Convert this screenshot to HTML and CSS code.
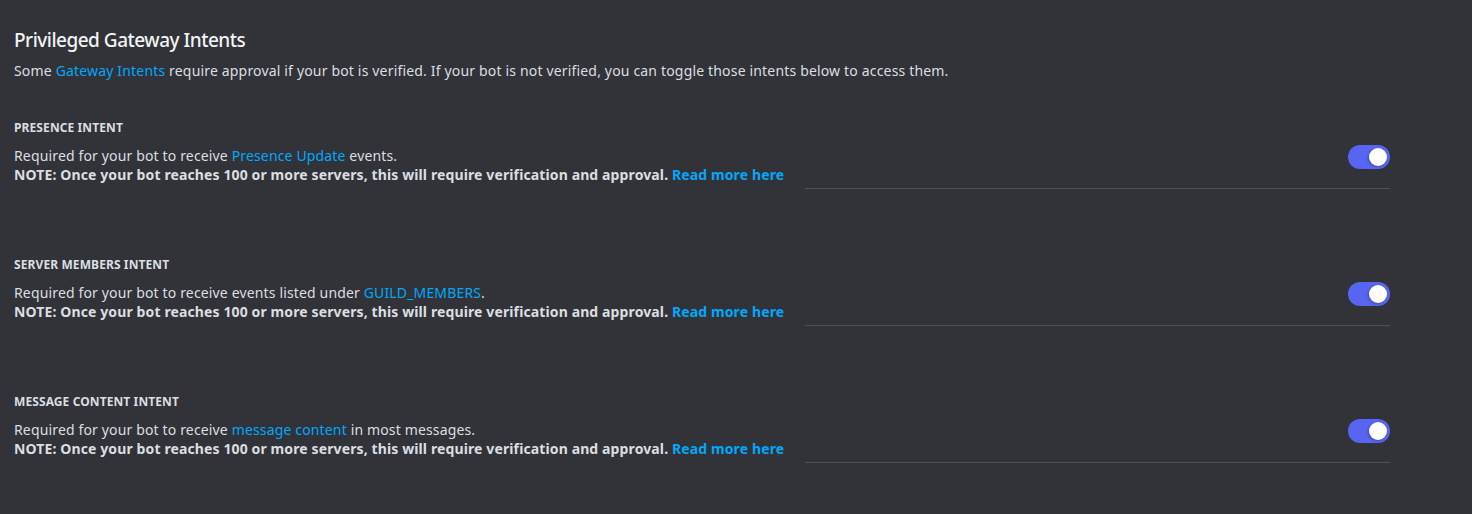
FILE: index.html
```html
<!DOCTYPE html>
<html>
<head>
<meta charset="utf-8">
<link rel="stylesheet" href="styles.css">
</head>
<body>
<div class="page">
  <h2 class="title">Privileged Gateway Intents</h2>
  <p class="intro">Some <a class="link">Gateway Intents</a> require approval if your bot is verified. If your bot is not verified, you can toggle those intents below to access them.</p>

  <section class="intent">
    <div class="label">PRESENCE INTENT</div>
    <div class="row">
      <div class="text">
        <div class="desc">Required for your bot to receive <a class="link">Presence Update</a> events.</div>
        <div class="note">NOTE: Once your bot reaches 100 or more servers, this will require verification and approval. <a class="link">Read more here</a></div>
      </div>
      <div class="side"><span class="toggle"><span class="knob"></span></span></div>
    </div>
  </section>

  <section class="intent">
    <div class="label">SERVER MEMBERS INTENT</div>
    <div class="row">
      <div class="text">
        <div class="desc">Required for your bot to receive events listed under <a class="link">GUILD_MEMBERS</a>.</div>
        <div class="note">NOTE: Once your bot reaches 100 or more servers, this will require verification and approval. <a class="link">Read more here</a></div>
      </div>
      <div class="side"><span class="toggle"><span class="knob"></span></span></div>
    </div>
  </section>

  <section class="intent">
    <div class="label">MESSAGE CONTENT INTENT</div>
    <div class="row">
      <div class="text">
        <div class="desc">Required for your bot to receive <a class="link">message content</a> in most messages.</div>
        <div class="note">NOTE: Once your bot reaches 100 or more servers, this will require verification and approval. <a class="link">Read more here</a></div>
      </div>
      <div class="side"><span class="toggle"><span class="knob"></span></span></div>
    </div>
  </section>
</div>
</body>
</html>
```
FILE: styles.css
```css
html, body {
  margin: 0;
  padding: 0;
  background: #313338;
}
body {
  font-family: "Noto Sans", "Open Sans", sans-serif;
  color: #dbdee1;
  width: 1472px;
  height: 514px;
  overflow: hidden;
}
.page {
  padding: 27px 82px 0 14px;
}
.title {
  margin: 0;
  font-size: 19px;
  font-weight: 500;
  line-height: 26px;
  letter-spacing: -0.5px;
  color: #f2f3f5;
}
.intro {
  margin: 8px 0 0 0;
  font-size: 14px;
  line-height: 20px;
  letter-spacing: 0.17px;
}
.link {
  color: #00a8fc;
  text-decoration: none;
}
.intent {
  margin-top: 39px;
}
.intent + .intent {
  margin-top: 68px;
}
.label {
  font-size: 12px;
  font-weight: 700;
  line-height: 16px;
  color: #dbdee1;
  letter-spacing: 0.1px;
}
.row {
  display: flex;
  margin-top: 10px;
}
.text {
  font-size: 14px;
  line-height: 19px;
  letter-spacing: 0.15px;
  padding-bottom: 5px;
}
.note {
  font-weight: 700;
  color: #dbdee1;
  letter-spacing: 0.12px;
}
.note .link {
  font-weight: 700;
}
.side {
  flex: 1;
  margin-left: 21px;
  border-bottom: 1px solid #4e5058;
  display: flex;
  justify-content: flex-end;
  align-items: flex-start;
}
.toggle {
  margin-top: -1px;
  width: 42px;
  height: 24px;
  border-radius: 12px;
  background: #5865f2;
  position: relative;
  display: block;
}
.knob {
  position: absolute;
  right: 3px;
  top: 3px;
  width: 18px;
  height: 18px;
  border-radius: 50%;
  background: #ffffff;
  box-shadow: -1px 1px 3px rgba(0,0,0,0.25);
}
```
